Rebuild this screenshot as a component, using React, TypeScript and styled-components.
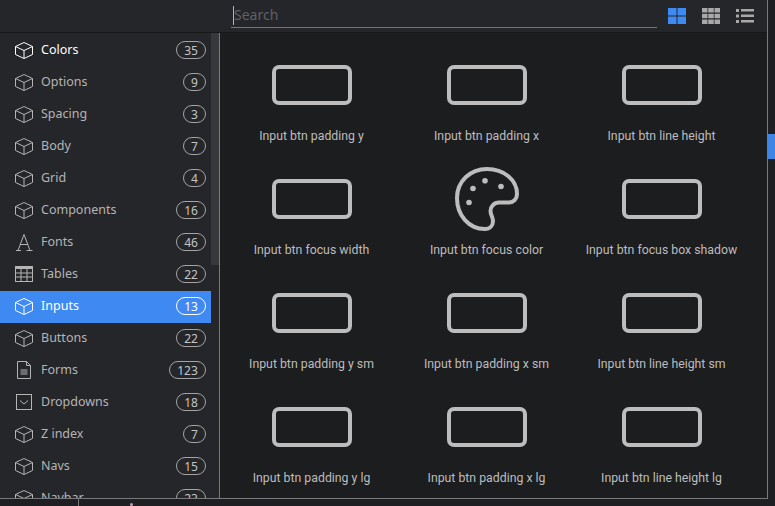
import React from "react";
import styled, { createGlobalStyle } from "styled-components";

const GlobalStyle = createGlobalStyle`
  html, body {
    margin: 0;
    height: 100%;
    overflow: hidden;
    background: #1e1f22;
    font-family: "Noto Sans", "Open Sans", sans-serif;
  }
`;

const Page = styled.div`
  width: 775px;
  height: 506px;
  display: flex;
  flex-direction: column;
  overflow: hidden;
`;

const MainRow = styled.div`
  display: flex;
  height: 499px;
  flex: none;
`;

const Window = styled.div`
  width: 767px;
  height: 498px;
  flex: none;
  display: flex;
  flex-direction: column;
  border-right: 1px solid #77797b;
  border-bottom: 1px solid #77797b;
  background: #1c1d1f;
`;

const EdgeStrip = styled.div`
  flex: 1;
  padding-top: 134px;
`;

const EdgeTab = styled.div`
  height: 25px;
  background: #3d86e8;
`;

const BottomStrip = styled.div`
  flex: 1;
  display: flex;
  padding-left: 78px;
  gap: 51px;
`;

const StripLine = styled.div`
  width: 1px;
  background: #77797b;
`;

const StripDot = styled.div`
  width: 3px;
  height: 3px;
  margin-top: 4px;
  border-radius: 50%;
  background: #c79bc4;
`;

const TopBar = styled.div`
  height: 32px;
  flex: none;
  display: flex;
  align-items: flex-start;
  background: #25262a;
  border-bottom: 1px solid #17181a;
  padding-left: 231px;
`;

const SearchBox = styled.div`
  position: relative;
  width: 426px;
  height: 27px;
  border-bottom: 1px solid #3f7fd0;
  box-sizing: content-box;
`;

const SearchInput = styled.input`
  width: 100%;
  height: 100%;
  box-sizing: border-box;
  padding: 2px 0 0 3px;
  border: none;
  outline: none;
  background: transparent;
  color: #ddd;
  font: 14px "Noto Sans", sans-serif;
  &::placeholder {
    color: #5f6164;
  }
`;

const Caret = styled.span`
  position: absolute;
  left: 2px;
  top: 6px;
  width: 1px;
  height: 19px;
  background: #b5b5b5;
`;

const ViewButtons = styled.div`
  display: flex;
  gap: 16px;
  margin-left: 11px;
  padding-top: 8px;
`;

const Content = styled.div`
  flex: 1;
  min-height: 0;
  display: flex;
`;

const Sidebar = styled.div`
  position: relative;
  width: 219px;
  flex: none;
  background: #25262a;
  border-right: 1px solid #77797b;
  overflow: hidden;
`;

const ScrollThumb = styled.div`
  position: absolute;
  top: 0;
  right: 0;
  width: 8px;
  height: 232px;
  background: #36383b;
`;

const NavList = styled.div`
  width: 211px;
  padding-top: 2px;
`;

const NavItem = styled.div<{ $active?: boolean; $bright?: boolean }>`
  height: 32px;
  box-sizing: border-box;
  display: flex;
  align-items: center;
  padding: 0 5px 2px 15px;
  background: ${(p) => (p.$active ? "#3f89f3" : "transparent")};
  color: ${(p) => (p.$active || p.$bright ? "#ffffff" : "#b4b4b4")};
`;

const NavIcon = styled.span`
  width: 18px;
  height: 18px;
  flex: none;
  display: flex;
  align-items: center;
  justify-content: center;
`;

const NavLabel = styled.span`
  flex: 1;
  margin-left: 8px;
  margin-top: -1px;
  font-size: 12.5px;
  line-height: 18px;
`;

const Badge = styled.span<{ $digits: number; $active?: boolean }>`
  flex: none;
  width: ${(p) => 14 + p.$digits * 7}px;
  height: 16px;
  box-sizing: content-box;
  border: 1px solid ${(p) => (p.$active ? "#ffffff" : "#a4a4a4")};
  border-radius: 9px;
  color: ${(p) => (p.$active ? "#ffffff" : "#c4c4c4")};
  font-size: 12px;
  line-height: 17px;
  text-align: center;
`;

const Grid = styled.div`
  flex: 1;
  display: grid;
  grid-template-columns: repeat(3, 175px);
  grid-auto-rows: 114px;
  padding-left: 4px;
  overflow: hidden;
`;

const Cell = styled.div`
  display: flex;
  flex-direction: column;
  align-items: center;
  padding-top: 20px;
`;

const CellIcon = styled.div`
  height: 64px;
  display: flex;
  align-items: center;
  justify-content: center;
`;

const RectShape = styled.div`
  width: 80px;
  height: 40px;
  box-sizing: border-box;
  border: 4px solid #bdbdbd;
  border-radius: 7px;
`;

const CellLabel = styled.div`
  margin-top: 10px;
  font-family: Roboto, sans-serif;
  font-size: 12.3px;
  line-height: 18px;
  color: #bcbcbc;
  white-space: nowrap;
`;

const Cube = () => (
  <svg width="18" height="17" viewBox="0 0 18 17" fill="none" stroke="currentColor" strokeWidth="1" strokeLinejoin="round">
    <path d="M9 .5l8.500 4v8L9 16.500l-8.500-4v-8z" />
    <path d="M.5 4.500L9 8.500l8.500-4M9 8.500v8" />
  </svg>
);

const FontIcon = () => (
  <svg width="18" height="18" viewBox="0 0 18 18" fill="none" stroke="currentColor" strokeWidth="1">
    <path d="M1 17.500h5M11.500 17.500h6M3 17.500L9 1.500l6 16M5 11.500h8" />
  </svg>
);

const TableIcon = () => (
  <svg width="18" height="16" viewBox="0 0 18 16" fill="none" stroke="currentColor" strokeWidth="1">
    <rect x=".5" y=".5" width="17" height="15" />
    <path d="M.5 2h17" strokeWidth="2" />
    <path d="M.5 7h17M.5 11h17M6 3v12M12 3v12" />
  </svg>
);

const FormIcon = () => (
  <svg width="14" height="18" viewBox="0 0 14 18" fill="none" stroke="currentColor" strokeWidth="1">
    <path d="M.5.5h9l4 4v13H.5zM9.500.5v4h4" />
    <path d="M3.500 9h7M3.500 11h7M3.500 13h7" />
  </svg>
);

const DropIcon = () => (
  <svg width="16" height="16" viewBox="0 0 16 16" fill="none" stroke="currentColor" strokeWidth="1">
    <rect x=".5" y=".5" width="15" height="15" />
    <path d="M4 6.500l4 3.500 4-3.500" />
  </svg>
);

const Palette = () => (
  <svg width="64" height="64" viewBox="0 0 64 64" fill="none" stroke="#bdbdbd" strokeWidth="4">
    <path d="M30 62C13.500 62 2 48 2 31 2 14.500 15 2 32 2c17 0 30 11 30 25 0 5-3.500 8.500-8 8.500H44c-5 0-8.500 4-8.500 8.500 0 4 2.500 6 2.500 10 0 4.500-3 8-8 8z" />
    <g fill="#bdbdbd" stroke="none">
      <circle cx="30" cy="13.700" r="2.800" />
      <circle cx="46" cy="19.500" r="2.800" />
      <circle cx="18" cy="21.500" r="2.800" />
      <circle cx="14" cy="35.500" r="2.800" />
    </g>
  </svg>
);

const LargeGridIcon = () => (
  <svg width="18" height="16" viewBox="0 0 18 16" fill="#3f89f3">
    <rect x="0" y="0" width="8.500" height="7.500" />
    <rect x="9.500" y="0" width="8.500" height="7.500" />
    <rect x="0" y="8.500" width="8.500" height="7.500" />
    <rect x="9.500" y="8.500" width="8.500" height="7.500" />
  </svg>
);

const SmallGridIcon = () => (
  <svg width="18" height="16" viewBox="0 0 18 16" fill="#a8a8a8">
    {[0, 6.25, 12.5].map((x) =>
      [0, 5.75, 11.5].map((y) => <rect key={`${x}-${y}`} x={x} y={y} width="5.500" height="4.500" />)
    )}
  </svg>
);

const ListIcon = () => (
  <svg width="18" height="16" viewBox="0 0 18 16" fill="#a8a8a8">
    {[1, 6.5, 12].map((y) => (
      <g key={y}>
        <rect x="0" y={y} width="3" height="3" />
        <rect x="5" y={y} width="13" height="2.500" />
      </g>
    ))}
  </svg>
);

const navItems: { label: string; count: number; icon?: React.ReactNode; bright?: boolean; active?: boolean }[] = [
  { label: "Colors", count: 35, bright: true },
  { label: "Options", count: 9 },
  { label: "Spacing", count: 3 },
  { label: "Body", count: 7 },
  { label: "Grid", count: 4 },
  { label: "Components", count: 16 },
  { label: "Fonts", count: 46, icon: <FontIcon /> },
  { label: "Tables", count: 22, icon: <TableIcon /> },
  { label: "Inputs", count: 13, active: true },
  { label: "Buttons", count: 22 },
  { label: "Forms", count: 123, icon: <FormIcon /> },
  { label: "Dropdowns", count: 18, icon: <DropIcon /> },
  { label: "Z index", count: 7 },
  { label: "Navs", count: 15 },
  { label: "Navbar", count: 23 },
];

const cells = [
  "Input btn padding y",
  "Input btn padding x",
  "Input btn line height",
  "Input btn focus width",
  "Input btn focus color",
  "Input btn focus box shadow",
  "Input btn padding y sm",
  "Input btn padding x sm",
  "Input btn line height sm",
  "Input btn padding y lg",
  "Input btn padding x lg",
  "Input btn line height lg",
];

const App = () => {
  return (
    <>
      <GlobalStyle />
      <Page>
        <MainRow>
          <Window>
            <TopBar>
              <SearchBox>
                <SearchInput placeholder="Search" />
                <Caret />
              </SearchBox>
              <ViewButtons>
                <LargeGridIcon />
                <SmallGridIcon />
                <ListIcon />
              </ViewButtons>
            </TopBar>
            <Content>
              <Sidebar>
                <ScrollThumb />
                <NavList>
                  {navItems.map((item) => (
                    <NavItem key={item.label} $active={item.active} $bright={item.bright}>
                      <NavIcon>{item.icon || <Cube />}</NavIcon>
                      <NavLabel>{item.label}</NavLabel>
                      <Badge $digits={String(item.count).length} $active={item.active}>
                        {item.count}
                      </Badge>
                    </NavItem>
                  ))}
                </NavList>
              </Sidebar>
              <Grid>
                {cells.map((label) => (
                  <Cell key={label}>
                    <CellIcon>{label === "Input btn focus color" ? <Palette /> : <RectShape />}</CellIcon>
                    <CellLabel>{label}</CellLabel>
                  </Cell>
                ))}
              </Grid>
            </Content>
          </Window>
          <EdgeStrip>
            <EdgeTab />
          </EdgeStrip>
        </MainRow>
        <BottomStrip>
          <StripLine />
          <StripDot />
        </BottomStrip>
      </Page>
    </>
  );
};

export default App;
